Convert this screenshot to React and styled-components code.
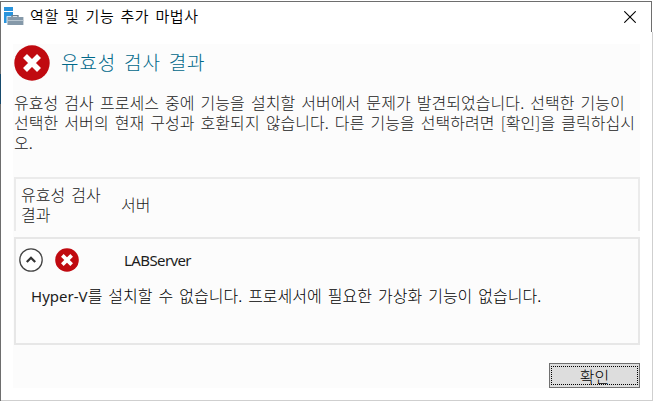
import React from "react";

import styled, { createGlobalStyle } from "styled-components";


const GlobalStyle = createGlobalStyle`
  * {
    box-sizing: border-box;
  }
  body {
    margin: 0;
    background: #fff;
    overflow: hidden;
    font-family: "Noto Sans CJK KR", "Noto Sans", sans-serif;
  }
`;

const Window = styled.div`
  position: relative;
  display: flex;
  flex-direction: column;
  width: 653px;
  height: 401px;
  padding-top: 1px;
  background: #fff;
`;

const Edge = styled.div`
  position: absolute;
  left: ${({ x }) => x}px;
  top: ${({ y }) => y}px;
  width: ${({ w }) => w || 1}px;
  height: ${({ h }) => h || 1}px;
  background: ${({ color }) => color};
`;

const TitleBar = styled.header`
  display: flex;
  align-items: center;
  height: 31px;
  padding: 0 17px 0 4px;
`;

const Title = styled.h1`
  flex: 1;
  margin: 0 0 2px 6px;
  font-size: 15px;
  font-weight: 350;
  line-height: 20px;
  letter-spacing: 0.6px;
  word-spacing: 2.2px;
  color: #000;
`;

const CloseButton = styled.button`
  display: flex;
  padding: 0;
  border: 0;
  background: none;
`;

const Content = styled.main`
  width: 627px;
  height: 344px;
  margin: 12px 0 0 13px;
  padding-left: 1px;
  background: #fcfcfc;
`;

const Heading = styled.div`
  display: flex;
  align-items: center;
  height: 38px;
`;

const HeadingText = styled.h2`
  margin: 0 0 2px 11px;
  font-size: 19px;
  font-weight: 300;
  line-height: 28px;
  letter-spacing: 0.9px;
  word-spacing: 2.8px;
  color: #00688a;
`;

const Message = styled.p`
  height: 60px;
  margin: 10px 0 0;
  font-size: 16px;
  font-weight: 300;
  line-height: 20px;
  letter-spacing: 0.06px;
  word-spacing: 2.4px;
  white-space: nowrap;
  color: #222;
`;

const TableHead = styled.div`
  display: flex;
  align-items: center;
  height: 54px;
  margin-top: 25px;
  padding-bottom: 2px;
  border: 2px solid #ebebeb;
  border-bottom: 0;
  font-size: 16px;
  font-weight: 300;
  line-height: 20px;
  letter-spacing: 0.04px;
  word-spacing: 2.4px;
  color: #222;
`;

const HeadCell = styled.div`
  width: ${({ width }) => width}px;
  padding-left: 5px;
`;

const Result = styled.section`
  height: 108px;
  margin-top: 6px;
  border: 2px solid #e7e7e7;
`;

const ResultRow = styled.div`
  display: flex;
  align-items: center;
  height: 41px;
  padding-left: 3px;
`;

const ResultStatus = styled.span`
  display: flex;
  gap: 12px;
`;

const ServerName = styled.span`
  margin-left: 45px;
  font-family: "Noto Sans", sans-serif;
  font-size: 15px;
  line-height: 20px;
  letter-spacing: -0.6px;
  color: #1c1c1c;
`;

const Detail = styled.p`
  margin: 5px 0 0 15px;
  font-size: 16px;
  font-weight: 300;
  line-height: 20px;
  letter-spacing: 0.02px;
  word-spacing: 2.4px;
  white-space: nowrap;
  color: #000;
`;

const Latin = styled.span`
  font-family: "Noto Sans", sans-serif;
  font-size: 15px;
  font-weight: 400;
  color: #1c1c1c;
`;

const Footer = styled.footer`
  display: flex;
  justify-content: flex-end;
  margin-top: 18px;
`;

const OkButton = styled.button`
  display: flex;
  width: 91px;
  height: 25px;
  padding: 2px 1px;
  border: 1px solid #707070;
  background: #ddd;
  font-family: inherit;
`;

const OkLabel = styled.span`
  flex: 1;
  height: 19px;
  border: 1px dotted #000;
  font-size: 16px;
  font-weight: 300;
  line-height: 18px;
  color: #000;
`;

const ServerIcon = () => (
  <svg width="20" height="20" viewBox="0 0 20 20">
    <path d="M0 0h9v16H0z" fill="#2a94dc" />
    <path d="M0 4.5h9" stroke="#fff" strokeWidth="1" />
    <path d="M2.6 9.2h17V18.6h-17z" fill="#fff" />
    <path d="M8 10.4V8.6h6v1.8" fill="none" stroke="#6d7f8d" strokeWidth="1.3" />
    <path d="M3.4 10h16v8h-16z" fill="#8599a9" />
    <path d="M3.4 13.5h16" stroke="#b9c6d0" />
  </svg>
);

const ErrorIcon = ({ size }) => (
  <svg width={size} height={size} viewBox="0 0 36 36">
    <circle cx="18" cy="18" r="17.7" fill="#c00a10" />
    <path d="M11 11l14 14M25 11L11 25" stroke="#fff" strokeWidth="5.6" />
  </svg>
);

const CollapseIcon = () => (
  <svg width="24" height="24" viewBox="0 0 24 24" fill="none">
    <circle cx="12" cy="12" r="11.2" fill="#fff" stroke="#444" strokeWidth="1.3" />
    <path d="M7.8 14l4.2-4.2 4.2 4.2" stroke="#333" strokeWidth="2.3" />
  </svg>
);

const CloseIcon = () => (
  <svg width="12" height="12" viewBox="0 0 12 12">
    <path d="M0.3 0.3l11.4 11.4M11.7 0.3L0.3 11.7" stroke="#000" strokeWidth="1.1" />
  </svg>
);

export default function App() {
  return (
    <>
      <GlobalStyle />
      <Window>
        <Edge x={0} y={1} w={652} color="#6e6e6e" />
        <Edge x={0} y={1} h={400} color="#6e6e6e" />
        <Edge x={0} y={74} h={30} color="#174a6b" />
        <Edge x={651} y={1} h={31} color="#6e6e6e" />
        <Edge x={652} y={32} h={369} color="#cfcfcf" />
        <Edge x={1} y={400} w={652} color="#cfcfcf" />
        <TitleBar>
          <ServerIcon />
          <Title>역할 및 기능 추가 마법사</Title>
          <CloseButton aria-label="닫기">
            <CloseIcon />
          </CloseButton>
        </TitleBar>
        <Content>
          <Heading>
            <ErrorIcon size={36} />
            <HeadingText>유효성 검사 결과</HeadingText>
          </Heading>
          <Message>
            유효성 검사 프로세스 중에 기능을 설치할 서버에서 문제가 발견되었습니다. 선택한 기능이<br />
            선택한 서버의 현재 구성과 호환되지 않습니다. 다른 기능을 선택하려면 [확인]을 클릭하십시<br />
            오.
          </Message>
          <TableHead>
            <HeadCell width={100}>유효성 검사<br />결과</HeadCell>
            <HeadCell width={200}>서버</HeadCell>
          </TableHead>
          <Result>
            <ResultRow>
              <ResultStatus>
                <CollapseIcon />
                <ErrorIcon size={24} />
              </ResultStatus>
              <ServerName>LABServer</ServerName>
            </ResultRow>
            <Detail><Latin>Hyper-V</Latin>를 설치할 수 없습니다. 프로세서에 필요한 가상화 기능이 없습니다.</Detail>
          </Result>
          <Footer>
            <OkButton>
              <OkLabel>확인</OkLabel>
            </OkButton>
          </Footer>
        </Content>
      </Window>
    </>
  );
}
